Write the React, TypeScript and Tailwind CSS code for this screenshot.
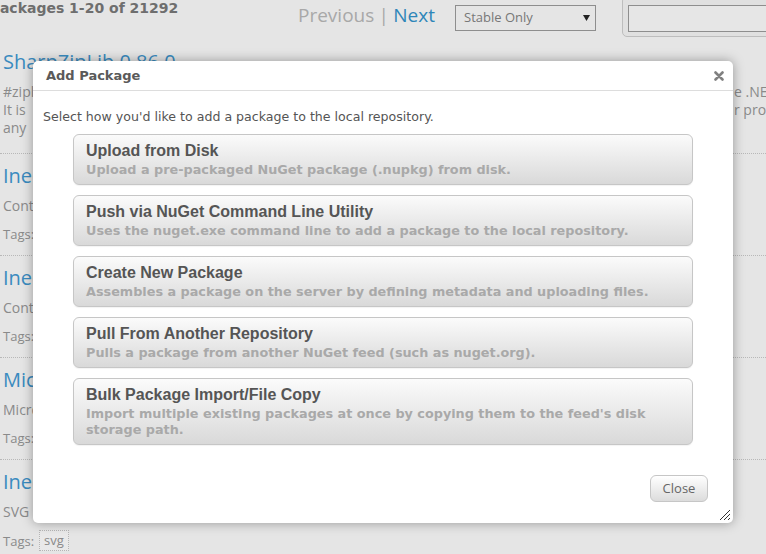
import React from "react";

const verdana = "font-['DejaVu_Sans',Verdana,sans-serif]";
const arial = "font-['Liberation_Sans',Arial,sans-serif]";
const segoe = "font-['Open_Sans',sans-serif]";

type Opt = { title: string; desc: React.ReactNode; last?: boolean };

const options: Opt[] = [
  { title: "Upload from Disk", desc: "Upload a pre-packaged NuGet package (.nupkg) from disk." },
  { title: "Push via NuGet Command Line Utility", desc: "Uses the nuget.exe command line to add a package to the local repository." },
  { title: "Create New Package", desc: "Assembles a package on the server by defining metadata and uploading files." },
  { title: "Pull From Another Repository", desc: "Pulls a package from another NuGet feed (such as nuget.org)." },
  {
    title: "Bulk Package Import/File Copy",
    desc: (
      <>
        Import multiple existing packages at once by copying them to the feed's disk
        <br />
        storage path.
      </>
    ),
    last: true,
  },
];

function Item({ title, desc, tags }: { title: string; desc: string; tags: React.ReactNode }) {
  return (
    <div className="border-t border-dotted border-[#b8b8b8] pl-[3px] h-[102px]">
      <div className={`${segoe} text-[20px] leading-[28px] mt-[8px] text-[#3a8bbf] whitespace-nowrap`}>{title}</div>
      <div className={`${segoe} text-[14px] leading-[20px] mt-[6px] text-[#8a8a8a] whitespace-nowrap`}>{desc}</div>
      <div className={`${segoe} text-[13px] leading-[20px] mt-[8px] text-[#8a8a8a] whitespace-nowrap flex items-center gap-[5px]`}>{tags}</div>
    </div>
  );
}

export default function App() {
  return (
    <div className="relative w-[766px] h-[554px] overflow-hidden bg-[#e5e5e5]">
      {/* Header */}
      <div className="flex items-start h-[48px]">
        <div className={`${verdana} font-bold text-[14px] leading-[16px] text-[#6e6e6e] -ml-[10px] w-[308px] shrink-0 whitespace-nowrap`}>
          Packages 1-20 of 21292
        </div>
        <div className={`${segoe} flex items-start shrink-0 mt-[3px] text-[19px] leading-[24px] whitespace-nowrap`}>
          <span className="text-[#a8a8a8]">Previous</span>
          <span className="w-[19px] text-center text-[#a8a8a8]">|</span>
          <span className="text-[#2e86b9]">Next</span>
        </div>
        <div className={`${segoe} shrink-0 ml-[20px] mt-[5px] w-[141px] h-[26px] border border-[#8e8e8e] flex items-center justify-between pl-[8px] pr-[5px] text-[13px] text-[#777]`}>
          <span>Stable Only</span>
          <svg width="7" height="6" viewBox="0 0 7 6">
            <polygon points="0,0 7,0 3.5,6" fill="#222" />
          </svg>
        </div>
        <div className="shrink-0 ml-[26px] -mt-[4px] w-[200px] h-[41px] border border-[#bdbdbd] rounded-[5px] bg-[#e0e0e0] pl-[5px] pt-[8px]">
          <div className="h-[27px] border border-[#8e8e8e] bg-[#e6e6e6]" />
        </div>
      </div>

      {/* Background list */}
      <div className="pl-[3px]">
        <div className={`${segoe} text-[20px] leading-[28px] text-[#3a8bbf] whitespace-nowrap`}>SharpZipLib 0.86.0</div>
        <div className={`${segoe} text-[14px] leading-[18px] mt-[7px] text-[#8a8a8a]`}>
          <div className="flex whitespace-nowrap">
            <span>#ziplib</span>
            <span className="ml-auto w-[32px] overflow-hidden">e .NET</span>
          </div>
          <div className="flex whitespace-nowrap">
            <span>It is</span>
            <span className="ml-auto w-[32px] overflow-hidden">r pro</span>
          </div>
          <div className="whitespace-nowrap">any</div>
        </div>
      </div>
      <div className="mt-[16px]">
        <Item title="Inedo.BuildMaster 4.0" desc="Contains the BuildMaster SDK" tags={<span>Tags:</span>} />
        <Item title="Inedo.ProGet 3.0" desc="Contains the ProGet SDK" tags={<span>Tags:</span>} />
        <Item title="Microsoft.Web.Infrastructure" desc="Microsoft.Web.Infrastructure" tags={<span>Tags:</span>} />
        <Item
          title="Inedo.Svg 1.0"
          desc="SVG rendering library"
          tags={
            <>
              <span>Tags:</span>
              <span className="border border-dotted border-[#b5b5b5] bg-[#e9e9e9] px-[4px] leading-[19px]">svg</span>
            </>
          }
        />
      </div>

      {/* Modal */}
      <div className="absolute left-[33px] top-[61px] w-[700px] h-[462px] bg-white rounded-[5px] shadow-[0_0_12px_rgba(0,0,0,0.35)] flex flex-col">
        <div className="h-[30px] border-b border-[#dddddd] flex items-center justify-between pl-[13px] pr-[9px]">
          <span className={`${verdana} font-bold text-[13px] text-[#5a5a5a] mt-[1px]`}>Add Package</span>
          <svg width="10" height="10" viewBox="0 0 10 10" className="mt-[1px]">
            <path d="M1.5 1.5 L8.5 8.5 M8.5 1.5 L1.5 8.5" stroke="#808080" strokeWidth="2.6" strokeLinecap="round" />
          </svg>
        </div>
        <div className="pt-[18px] px-[10px]">
          <p className={`${verdana} text-[12.6px] leading-[16px] text-[#555]`}>
            Select how you'd like to add a package to the local repository.
          </p>
          <div className="mt-[9px] mx-[30px] flex flex-col gap-[10px]">
            {options.map((o) => (
              <div
                key={o.title}
                className="border border-[#c6c6c6] rounded-[6px] bg-linear-to-b from-[#fbfbfb] to-[#d9d9d9] pl-[12px] pt-[7px] pb-[6px] shadow-[0_1px_1px_rgba(0,0,0,0.05)]"
              >
                <div className={`${arial} font-bold text-[16px] leading-[18px] text-[#555]`}>{o.title}</div>
                <div className={`${verdana} font-bold text-[12.8px] leading-[16px] mt-[2px] text-[#a9a9a9]`}>{o.desc}</div>
              </div>
            ))}
          </div>
        </div>
        <div className="flex justify-end mt-[30px] pr-[25px]">
          <div className={`${segoe} w-[58px] h-[27px] border border-[#c6c6c6] rounded-[6px] bg-linear-to-b from-[#ffffff] to-[#dcdcdc] flex items-center justify-center text-[13px] text-[#666]`}>
            Close
          </div>
        </div>
        <svg className="absolute right-[2px] bottom-[2px]" width="12" height="12" viewBox="0 0 12 12">
          <path d="M11 1 L1 11 M11 5 L5 11 M11 9 L9 11" stroke="#333" strokeWidth="1" />
        </svg>
      </div>
    </div>
  );
}
